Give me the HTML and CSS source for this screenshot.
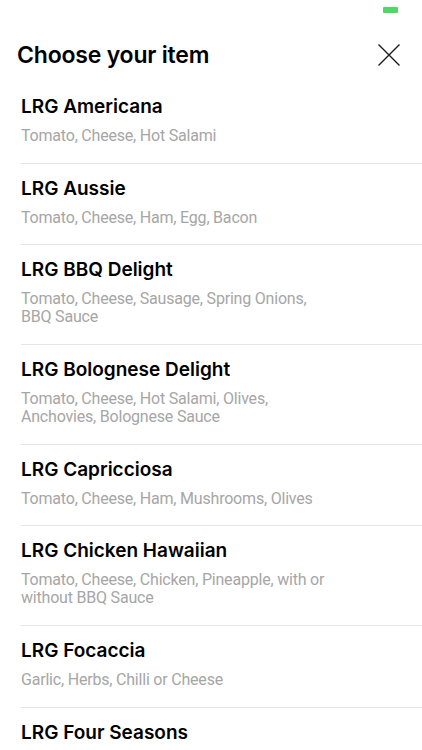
FILE: index.html
```html
<!DOCTYPE html>
<html lang="en">
<head>
    <meta charset="utf-8">
    <title>Choose your item</title>
    <link rel="stylesheet" href="styles.css">
</head>
<body>
    <div class="statusbar">
        <span class="battery"></span>
    </div>

    <div class="header">
        <h1 class="header-title">Choose your item</h1>
        <button class="close" aria-label="Close">
            <svg width="22" height="22" viewBox="0 0 22 22">
                <path d="M0.5 0.5L21.5 21.5M21.5 0.5L0.5 21.5" stroke="#1c1c1c" stroke-width="1.4" fill="none"/>
            </svg>
        </button>
    </div>

    <ul class="items">
        <li class="item">
            <div class="item-name">LRG Americana</div>
            <div class="item-desc">Tomato, Cheese, Hot Salami</div>
        </li>
        <li class="item">
            <div class="item-name">LRG Aussie</div>
            <div class="item-desc">Tomato, Cheese, Ham, Egg, Bacon</div>
        </li>
        <li class="item">
            <div class="item-name">LRG BBQ Delight</div>
            <div class="item-desc">Tomato, Cheese, Sausage, Spring Onions, BBQ Sauce</div>
        </li>
        <li class="item">
            <div class="item-name">LRG Bolognese Delight</div>
            <div class="item-desc">Tomato, Cheese, Hot Salami, Olives, Anchovies, Bolognese Sauce</div>
        </li>
        <li class="item">
            <div class="item-name">LRG Capricciosa</div>
            <div class="item-desc">Tomato, Cheese, Ham, Mushrooms, Olives</div>
        </li>
        <li class="item">
            <div class="item-name">LRG Chicken Hawaiian</div>
            <div class="item-desc">Tomato, Cheese, Chicken, Pineapple, with or without BBQ Sauce</div>
        </li>
        <li class="item">
            <div class="item-name">LRG Focaccia</div>
            <div class="item-desc">Garlic, Herbs, Chilli or Cheese</div>
        </li>
        <li class="item">
            <div class="item-name">LRG Four Seasons</div>
        </li>
    </ul>
</body>
</html>
```

FILE: styles.css
```css
body {
    margin: 0;
    background: #fff;
    font-family: Inter, "Noto Sans", sans-serif;
    color: #000;
    overflow: hidden;
}

.statusbar {
    height: 20px;
    display: flex;
    justify-content: flex-end;
    align-items: flex-start;
    padding-right: 24px;
}

.battery {
    display: block;
    width: 15px;
    height: 6px;
    margin-top: 7px;
    background: #4cd964;
    border-radius: 1px;
}

/* title row */

.header {
    display: flex;
    align-items: center;
    justify-content: space-between;
    padding: 20px 22px 12px 17px;
}

.header-title {
    margin: 0;
    font-size: 23px;
    line-height: 30px;
    font-weight: 600;
    letter-spacing: -0.2px;
}

.close {
    border: 0;
    padding: 0;
    background: none;
    width: 22px;
    height: 22px;
    display: flex;
}

/* list */

.items {
    list-style: none;
    margin: 0;
    padding: 0 0 0 21px;
}

.item {
    padding: 13px 0 17.7px;
    border-bottom: 1px solid #e6e6e6;
}

.item-name {
    font-size: 19px;
    line-height: 23px;
    font-weight: 600;
}

.item-desc {
    margin-top: 9px;
    max-width: 312px;
    font-family: Roboto, Inter, sans-serif;
    font-size: 16px;
    line-height: 18px;
    letter-spacing: -0.2px;
    color: #a6a6a6;
}
```
